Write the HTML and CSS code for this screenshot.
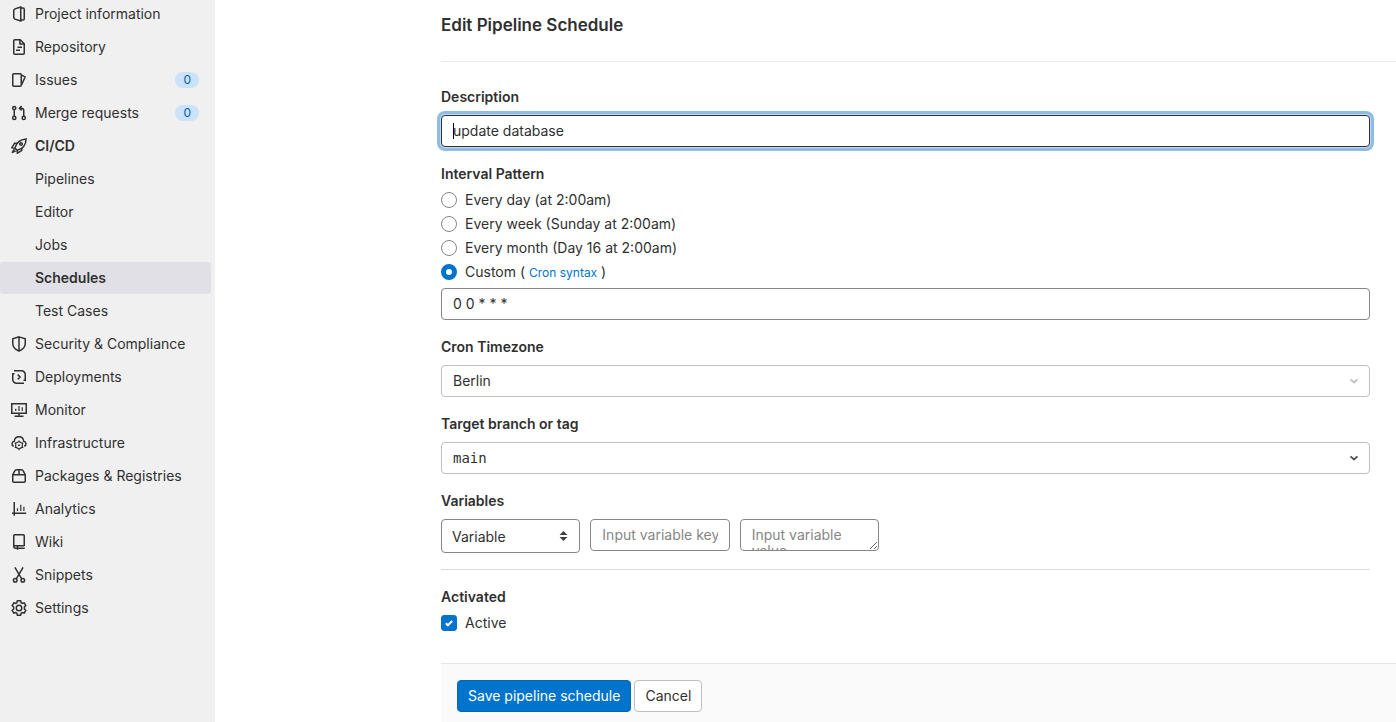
FILE: index.html
```html
<!DOCTYPE html>
<html lang="en">
<head>
<meta charset="utf-8">
<title>Edit Pipeline Schedule</title>
<link rel="stylesheet" href="styles.css">
</head>
<body>
<div class="layout">
  <nav class="sidebar" aria-label="Project navigation">
    <ul class="nav-list">
      <li><a class="nav-item" href="#"><svg class="icon" viewBox="0 0 16 16"><path d="M9.75 1v14L4 13.2 2.75 11.8V4.2L4 2.8z"/><path d="M10 2h2a1.25 1.25 0 0 1 1.25 1.25v9.5A1.25 1.25 0 0 1 12 14h-2"/></svg>Project information</a></li>
      <li><a class="nav-item" href="#"><svg class="icon" viewBox="0 0 16 16"><path d="M9.25.75h-5.5a1 1 0 0 0-1 1v12.5a1 1 0 0 0 1 1h8.5a1 1 0 0 0 1-1v-9.5z"/><path d="M8.9 1v4.1H13M6.5 8.2H11M5 11.2h4"/></svg>Repository</a></li>
      <li><a class="nav-item" href="#"><svg class="icon" viewBox="0 0 16 16"><rect x="1.75" y="1.75" width="8.5" height="12.5" rx="1"/><path d="m10.5 3.2 2.9 1.2q.8.3.5 1.1L10.6 12.6"/></svg>Issues<span class="badge">0</span></a></li>
      <li><a class="nav-item" href="#"><svg class="icon" viewBox="0 0 16 16"><circle cx="3.25" cy="3" r="1.6"/><circle cx="3.25" cy="12.9" r="1.6"/><circle cx="12.75" cy="12.9" r="1.6"/><path d="M3.25 4.7v6.5M12.75 11.2V5.5a2.3 2.3 0 0 0-2.3-2.3H8.6M10.6 1 8.4 3.2l2.2 2.2"/></svg>Merge requests<span class="badge">0</span></a></li>
      <li><a class="nav-item nav-item-strong" href="#"><svg class="icon" viewBox="0 0 16 16"><path d="M4 10.2C5.1 5.2 8.4 1.4 15.1.9 14.9 7.3 11 11 6.2 12.3z"/><path d="M6 5.2H3.6L.9 9.6l2.9.6M10.8 10v2.4l-4.4 2.8-.4-2.8M3.4 11.2 1.1 14.7l3.6-1.9"/><circle cx="10" cy="6" r="1.3"/></svg>CI/CD</a></li>
      <li><a class="nav-item nav-sub" href="#">Pipelines</a></li>
      <li><a class="nav-item nav-sub" href="#">Editor</a></li>
      <li><a class="nav-item nav-sub" href="#">Jobs</a></li>
      <li><a class="nav-item nav-sub nav-item-strong nav-current" href="#" aria-current="page">Schedules</a></li>
      <li><a class="nav-item nav-sub" href="#">Test Cases</a></li>
      <li><a class="nav-item" href="#"><svg class="icon" viewBox="0 0 16 16"><path d="m8 .9 6.25 1.9v4.4c0 3.8-2.4 6.3-6.25 7.9-3.85-1.6-6.25-4.1-6.25-7.9V2.8zM8 1v14"/></svg>Security &amp; Compliance</a></li>
      <li><a class="nav-item" href="#"><svg class="icon" viewBox="0 0 16 16"><path d="M3 1.75h7.5a3.75 3.75 0 0 1 3.75 3.75v5.75h-1.8M13 14.25H5.5a3.75 3.75 0 0 1-3.75-3.75V4.75h1.8M6.7 5.6 9.1 8l-2.4 2.4"/></svg>Deployments</a></li>
      <li><a class="nav-item" href="#"><svg class="icon" viewBox="0 0 16 16"><path d="M.75 1.75h14.5v9.5H.75zM8 11.5v2.7M3.5 14.25h9"/><path class="thin" d="M4.75 6.8v2.1M8 4v4.9M11.25 5.3v3.6"/></svg>Monitor</a></li>
      <li><a class="nav-item" href="#"><svg class="icon" viewBox="0 0 16 16"><path d="M2.7 11.2A2.6 2.6 0 0 1 3.3 6.2C3.6 3.2 5.6 1.75 8 1.75s4.4 1.45 4.7 4.45a2.6 2.6 0 0 1 .6 5"/><path class="thin" d="m8 6.4 3.3 1.9v3.8L8 14l-3.3-1.9V8.3zM8 5.6v1M8 13.8v1.4M4.7 8.3l-1-.6M11.3 8.3l1-.6M4.7 12.1l-1 .6M11.3 12.1l1 .6"/><circle class="dot" cx="8" cy="10.2" r="1"/></svg>Infrastructure</a></li>
      <li><a class="nav-item" href="#"><svg class="icon" viewBox="0 0 16 16"><path d="M1.75 6.75h12.5v6.5a1 1 0 0 1-1 1H2.75a1 1 0 0 1-1-1zL3.8 2.9a2 2 0 0 1 1.8-1.15h4.8a2 2 0 0 1 1.8 1.15l2.05 3.85M8 1.75v5"/></svg>Packages &amp; Registries</a></li>
      <li><a class="nav-item" href="#"><svg class="icon" viewBox="0 0 16 16"><path d="M3.25 1v13.8M1 12.25h14.2"/><path class="thin" d="M6.5 7.2v2.9M9.8 3.8v6.3M12.9 5.8v4.3"/></svg>Analytics</a></li>
      <li><a class="nav-item" href="#"><svg class="icon" viewBox="0 0 16 16"><path d="M13.25 12V1.75a1 1 0 0 0-1-1h-8.5a1 1 0 0 0-1 1v11.1c0 .8.5 1.4 1.3 1.4h9.7M3 11.75h10.5M6.5 12v3.8"/></svg>Wiki</a></li>
      <li><a class="nav-item" href="#"><svg class="icon" viewBox="0 0 16 16"><circle cx="4.2" cy="13.3" r="1.8"/><circle cx="11.8" cy="13.3" r="1.8"/><path d="m3.9.4 6.8 11.4M12.1.4 5.3 11.8"/></svg>Snippets</a></li>
      <li><a class="nav-item" href="#"><svg class="icon" viewBox="0 0 16 16"><path d="M6.4.75h3.2l.5 1.9 1.2.7 1.9-.5 1.6 2.7L13.4 7v2l1.4 1.4-1.6 2.7-1.9-.5-1.2.7-.5 1.9H6.4l-.5-1.9-1.2-.7-1.9.5-1.6-2.7L2.6 9V7L1.2 5.55l1.6-2.7 1.9.5 1.2-.7z"/><circle cx="8" cy="8" r="2.75"/></svg>Settings</a></li>
    </ul>
  </nav>

  <main class="content">
    <h1 class="page-title">Edit Pipeline Schedule</h1>
    <form class="schedule-form">
      <div class="fields">
        <div class="group">
          <label class="label" for="description">Description</label>
          <div class="control-wrap">
            <input class="control control-text control-focused" id="description" type="text" value="update database">
            <span class="caret" aria-hidden="true"></span>
          </div>
        </div>

        <div class="group group-tight" role="radiogroup" aria-labelledby="interval-label">
          <span class="label" id="interval-label">Interval Pattern</span>
          <div class="choices">
            <div class="choice"><input class="radio" type="radio" name="interval" id="daily"><label for="daily">Every day (at 2:00am)</label></div>
            <div class="choice"><input class="radio" type="radio" name="interval" id="weekly"><label for="weekly">Every week (Sunday at 2:00am)</label></div>
            <div class="choice"><input class="radio" type="radio" name="interval" id="monthly"><label for="monthly">Every month (Day 16 at 2:00am)</label></div>
            <div class="choice"><input class="radio" type="radio" name="interval" id="custom" checked><label for="custom">Custom ( <a class="hint-link" href="#">Cron syntax</a> )</label></div>
          </div>
          <input class="control control-text" type="text" value="0 0 * * *" aria-label="Custom interval">
        </div>

        <div class="group">
          <label class="label" for="timezone">Cron Timezone</label>
          <div class="control-wrap">
            <select class="control control-light" id="timezone"><option>Berlin</option></select>
            <svg class="chevron chevron-muted" viewBox="0 0 16 16"><path d="m4.5 6.3 3.5 3.2 3.5-3.2"/></svg>
          </div>
        </div>

        <div class="group">
          <label class="label" for="branch">Target branch or tag</label>
          <div class="control-wrap">
            <select class="control control-light control-mono" id="branch"><option>main</option></select>
            <svg class="chevron" viewBox="0 0 16 16"><path d="m4.5 6.3 3.5 3.2 3.5-3.2"/></svg>
          </div>
        </div>

        <div class="group group-divided">
          <span class="label">Variables</span>
          <div class="variable-row">
            <div class="control-wrap variable-cell">
              <select class="control control-type" aria-label="Variable type"><option>Variable</option></select>
              <svg class="sorter" viewBox="0 0 8 10"><path d="M4 0 8 4H0zM4 10 0 6h8z"/></svg>
            </div>
            <input class="control control-text variable-cell" type="text" placeholder="Input variable key" aria-label="Variable key">
            <textarea class="control control-area variable-cell" placeholder="Input variable value" aria-label="Variable value" rows="1"></textarea>
          </div>
        </div>

        <div class="group group-tight">
          <span class="label">Activated</span>
          <div class="choice">
            <span class="check-wrap"><input class="checkbox" type="checkbox" id="active" checked><svg class="tick" viewBox="0 0 16 16"><path d="m4.8 8.2 2.1 2.1 4.3-4.3"/></svg></span>
            <label for="active">Active</label>
          </div>
        </div>
      </div>
      <div class="actions">
        <button class="button button-primary" type="submit">Save pipeline schedule</button>
        <button class="button" type="button">Cancel</button>
      </div>
    </form>
  </main>
</div>
</body>
</html>
```
FILE: styles.css
```css
* { box-sizing: border-box; }

body {
  margin: 0;
  background: #fff;
  color: #303030;
  font: 14px/20px Inter, "Liberation Sans", sans-serif;
}

.layout {
  display: flex;
  height: 100vh;
  overflow: hidden;
}

.sidebar {
  flex: 0 0 215px;
  background: #f0f0f0;
}

.nav-list {
  display: flex;
  flex-direction: column;
  gap: 1px;
  margin: -2px 4px 0 0;
  padding: 0;
  list-style: none;
}

.nav-item {
  display: flex;
  align-items: center;
  gap: 8px;
  height: 32px;
  padding: 0 12px 0 11px;
  border-radius: 3px;
  color: #303030;
  text-decoration: none;
}

.nav-sub { padding-left: 35px; }
.nav-item-strong { font-weight: 600; }
.nav-current { background: #e1e0e6; }

.icon {
  flex: none;
  width: 16px;
  height: 16px;
  fill: none;
  stroke: #303030;
  stroke-width: 1.5;
}

.thin { stroke-width: 1.2; }
.dot { fill: #303030; stroke: none; }

.badge {
  margin-left: auto;
  padding: 0 8px;
  border-radius: 8px;
  background: #cbe2f9;
  color: #0b5cad;
  font-size: 12px;
  line-height: 16px;
}

.content {
  flex: 1;
  min-width: 0;
  display: flex;
  flex-direction: column;
  padding-left: 226px;
}

.page-title {
  margin: 0;
  padding: 13px 0 24px;
  border-bottom: 1px solid #eaeaea;
  font-size: 17px;
  font-weight: 600;
  line-height: 24px;
}

.schedule-form {
  flex: 1;
  display: flex;
  flex-direction: column;
}

.fields {
  display: flex;
  flex-direction: column;
  gap: 17px;
  padding: 25px 26px 28px 0;
}

.group {
  display: flex;
  flex-direction: column;
  gap: 8px;
}

.group-tight { gap: 4px; }

.group-divided {
  padding-bottom: 16px;
  border-bottom: 1px solid #dbdbdb;
}

.label { font-weight: 600; }

.control-wrap {
  position: relative;
  display: flex;
}

.control {
  width: 100%;
  min-width: 0;
  height: 32px;
  margin: 0;
  padding: 0 11px;
  border: 1px solid #868686;
  border-radius: 4px;
  outline: none;
  background: #fff;
  color: #303030;
  font: inherit;
  line-height: 16px;
  appearance: none;
}

.control::placeholder { color: #868686; opacity: 1; }

.control-text { padding-bottom: 2px; }

.control-focused {
  border-color: #303030;
  box-shadow: 0 0 0 1px #c5d9ec, 0 0 0 4px #8fbce5;
}

.caret {
  position: absolute;
  top: 8px;
  left: 12px;
  width: 1px;
  height: 16px;
  background: #000;
}

.control-light { border-color: #bfbfbf; }
.control-mono { font-family: "DejaVu Sans Mono", monospace; }

.control-type {
  height: 34px;
  padding: 2px 10px 0;
}

.control-area {
  padding: 7px 11px;
  overflow: hidden;
  resize: both;
}

.chevron {
  position: absolute;
  top: 8px;
  right: 8px;
  width: 16px;
  height: 16px;
  fill: none;
  stroke: #525252;
  stroke-width: 1.8;
  pointer-events: none;
}

.chevron-muted { stroke: #bfbfbf; }

.sorter {
  position: absolute;
  top: 12px;
  right: 12px;
  width: 9px;
  height: 10px;
  fill: #404040;
  pointer-events: none;
}

.variable-row {
  display: flex;
  align-items: flex-start;
  gap: 10px;
}

.variable-cell { flex: 0 0 15%; width: 15%; }

.choice {
  display: flex;
  align-items: center;
  gap: 8px;
  height: 24px;
}

.radio {
  width: 16px;
  height: 16px;
  margin: 0;
  border: 1px solid #868686;
  border-radius: 50%;
  background: #fff;
  appearance: none;
}

.radio:checked { border: 5px solid #0074cc; }

.hint-link {
  color: #0074cc;
  font-size: 12px;
  text-decoration: none;
}

.check-wrap {
  position: relative;
  display: flex;
}

.checkbox {
  width: 16px;
  height: 16px;
  margin: 0;
  border: 1px solid #868686;
  border-radius: 3px;
  appearance: none;
}

.checkbox:checked { border-color: #0074cc; background: #0074cc; }

.tick {
  position: absolute;
  inset: 0;
  width: 16px;
  height: 16px;
  fill: none;
  stroke: #fff;
  stroke-width: 2;
  pointer-events: none;
}

.actions {
  flex: 1;
  display: flex;
  align-items: flex-start;
  gap: 3px;
  padding: 16px;
  border-top: 1px solid #e5e5e5;
  background: #fafafa;
}

.button {
  height: 32px;
  padding: 0 10px;
  border: 1px solid #bfbfbf;
  border-radius: 4px;
  background: #fff;
  color: #303030;
  font: inherit;
  white-space: nowrap;
}

.button-primary {
  border-color: #0066b8;
  background: #0074cc;
  color: #fff;
}
```
